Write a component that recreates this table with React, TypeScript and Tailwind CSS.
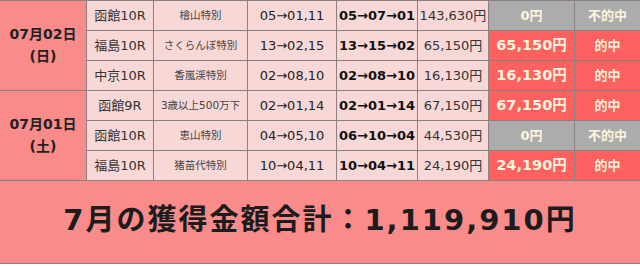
import { Fragment } from "react";

type Race = {
  venue: string;
  name: string;
  prediction: string;
  result: string;
  payout: string;
  win: string;
  hit: boolean;
};

type Day = {
  date: string;
  weekday: string;
  races: Race[];
};

const days: Day[] = [
  {
    date: "07月02日",
    weekday: "(日)",
    races: [
      { venue: "函館10R", name: "檜山特別", prediction: "05→01,11", result: "05→07→01", payout: "143,630円", win: "0円", hit: false },
      { venue: "福島10R", name: "さくらんぼ特別", prediction: "13→02,15", result: "13→15→02", payout: "65,150円", win: "65,150円", hit: true },
      { venue: "中京10R", name: "香嵐渓特別", prediction: "02→08,10", result: "02→08→10", payout: "16,130円", win: "16,130円", hit: true },
    ],
  },
  {
    date: "07月01日",
    weekday: "(土)",
    races: [
      { venue: "函館9R", name: "3歳以上500万下", prediction: "02→01,14", result: "02→01→14", payout: "67,150円", win: "67,150円", hit: true },
      { venue: "函館10R", name: "恵山特別", prediction: "04→05,10", result: "06→10→04", payout: "44,530円", win: "0円", hit: false },
      { venue: "福島10R", name: "猪苗代特別", prediction: "10→04,11", result: "10→04→11", payout: "24,190円", win: "24,190円", hit: true },
    ],
  },
];

const font = "font-['DejaVu_Sans','Noto_Sans_CJK_JP',sans-serif]";

export default function App() {
  return (
    <div className={`w-[640px] h-[266px] bg-white ${font}`}>
      <div className="grid grid-cols-[86px_66px_93px_88px_80px_70px_85px_65px] auto-rows-[29px] gap-px bg-[#8c8080] py-px">
        {days.map((day) => (
          <Fragment key={day.date}>
            <div className="row-span-3 flex flex-col items-center justify-center gap-[5px] bg-[#f98b8b] text-[14px] font-bold leading-[17px] text-[#222]">
              <span>{day.date}</span>
              <span>{day.weekday}</span>
            </div>
            {day.races.map((race) => (
              <RaceRow key={`${day.date}-${race.venue}`} race={race} />
            ))}
          </Fragment>
        ))}
      </div>
      <div className="flex h-[82px] items-center justify-center bg-[#f98b8b] pb-[3px] text-[29px] font-bold tracking-[2px] text-[#1c1c1c]">
        7月の獲得金額合計：1,119,910円
      </div>
      <div className="h-px bg-[#8c8080]" />
    </div>
  );
}

function RaceRow({ race }: { race: Race }) {
  const cell = "flex items-center justify-center bg-[#f8d7d7]";
  const outcome = race.hit ? "bg-[#ff6161]" : "bg-[#acacac]";

  return (
    <>
      <div className={`${cell} text-[13px] text-[#333]`}>{race.venue}</div>
      <div className={`${cell} text-[10.5px] text-[#444]`}>{race.name}</div>
      <div className={`${cell} text-[13px] text-[#222]`}>{race.prediction}</div>
      <div className={`${cell} text-[13px] font-bold text-[#111]`}>{race.result}</div>
      <div className={`${cell} text-[13px] text-[#333]`}>{race.payout}</div>
      <div
        className={`flex items-center justify-center font-bold text-[#fff4dc] ${outcome} ${
          race.hit ? "text-[14.5px]" : "text-[13px]"
        }`}
      >
        {race.win}
      </div>
      <div className={`flex items-center justify-center text-[13px] font-bold text-[#fff4dc] ${outcome}`}>
        {race.hit ? "的中" : "不的中"}
      </div>
    </>
  );
}
